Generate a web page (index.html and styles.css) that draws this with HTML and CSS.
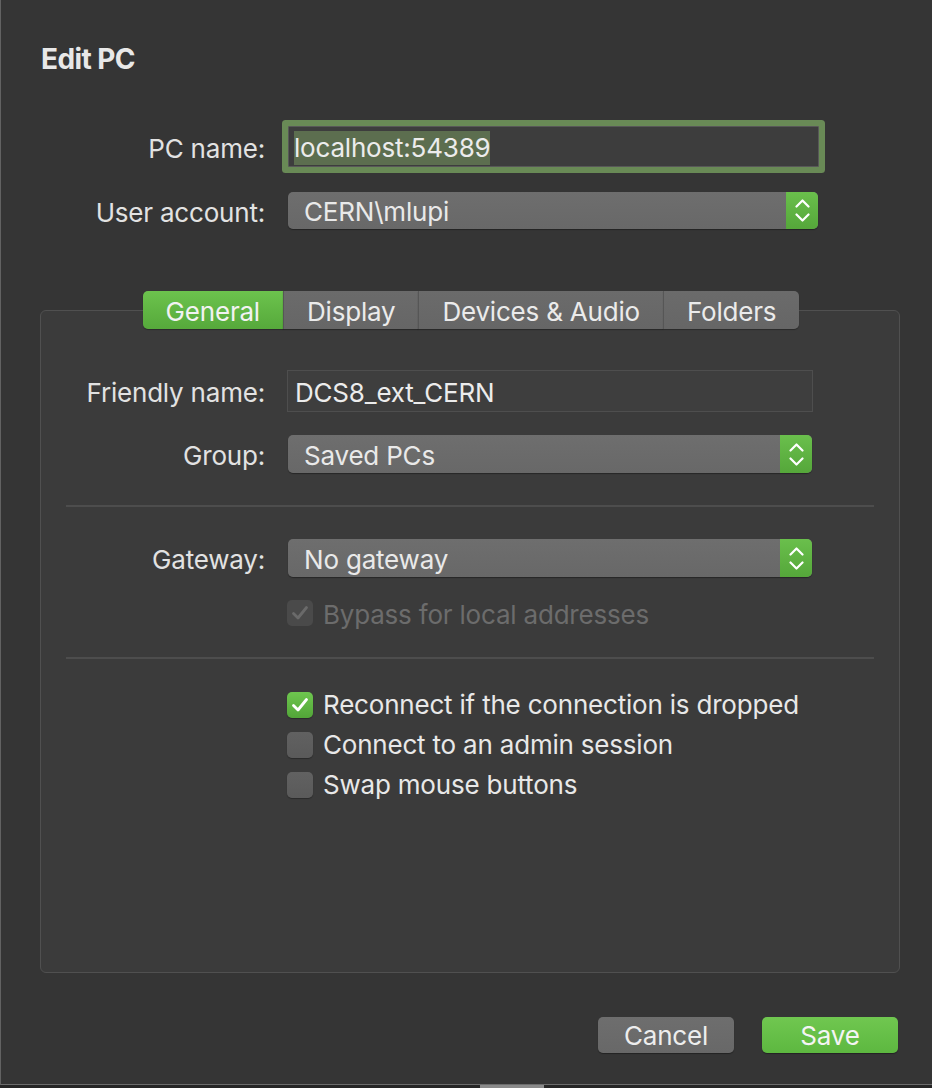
FILE: index.html
```html
<!DOCTYPE html>
<html>
<head>
<meta charset="utf-8">
<title>Edit PC</title>
<link rel="stylesheet" href="styles.css">
</head>
<body>
<div class="window">
  <h1 class="title">Edit PC</h1>

  <div class="top-form">
    <div class="row">
      <span class="label">PC name:</span>
      <div class="field field-focused"><span class="selection">localhost:54389</span></div>
    </div>
    <div class="row row-user">
      <span class="label">User account:</span>
      <div class="popup popup-top">
        <span class="popup-text">CERN\mlupi</span>
        <span class="stepper"><svg class="chev" viewBox="-1.5 -1.5 15 23" width="15" height="23"><path d="M0 6 L6 0 L12 6 M0 14 L6 20 L12 14"/></svg></span>
      </div>
    </div>
  </div>

  <div class="tabview">
    <div class="tabs">
      <div class="tab tab-active">General</div>
      <div class="tab">Display</div>
      <div class="tab">Devices &amp; Audio</div>
      <div class="tab">Folders</div>
    </div>
    <div class="panel">
      <div class="prow prow-friendly">
        <span class="plabel">Friendly name:</span>
        <div class="field field-plain"><span class="field-text">DCS8_ext_CERN</span></div>
      </div>
      <div class="prow prow-group">
        <span class="plabel">Group:</span>
        <div class="popup popup-panel">
          <span class="popup-text">Saved PCs</span>
          <span class="stepper"><svg class="chev" viewBox="-1.5 -1.5 15 23" width="15" height="23"><path d="M0 6 L6 0 L12 6 M0 14 L6 20 L12 14"/></svg></span>
        </div>
      </div>
      <div class="separator sep-1"></div>
      <div class="prow prow-gateway">
        <span class="plabel">Gateway:</span>
        <div class="popup popup-panel">
          <span class="popup-text">No gateway</span>
          <span class="stepper"><svg class="chev" viewBox="-1.5 -1.5 15 23" width="15" height="23"><path d="M0 6 L6 0 L12 6 M0 14 L6 20 L12 14"/></svg></span>
        </div>
      </div>
      <div class="check-row check-bypass disabled">
        <span class="box box-disabled"><svg class="tick" viewBox="0 0 26 26" width="26" height="26"><path d="M6.5 13.5 L11 18 L19.5 7.5"/></svg></span>
        <span class="check-label">Bypass for local addresses</span>
      </div>
      <div class="separator sep-2"></div>
      <div class="check-list">
        <div class="check-row">
          <span class="box box-on"><svg class="tick" viewBox="0 0 26 26" width="26" height="26"><path d="M6.5 13.5 L11 18 L19.5 7.5"/></svg></span>
          <span class="check-label">Reconnect if the connection is dropped</span>
        </div>
        <div class="check-row">
          <span class="box box-off"></span>
          <span class="check-label">Connect to an admin session</span>
        </div>
        <div class="check-row">
          <span class="box box-off"></span>
          <span class="check-label">Swap mouse buttons</span>
        </div>
      </div>
    </div>
  </div>

  <div class="buttons">
    <button class="btn btn-cancel">Cancel</button>
    <button class="btn btn-save">Save</button>
  </div>
</div>
<div class="desk"><span class="desk-item"></span></div>
</body>
</html>
```

FILE: styles.css
```css
html, body {
  margin: 0;
  padding: 0;
}
body {
  width: 932px;
  height: 1088px;
  overflow: hidden;
  background: #1f1f1f;
  font-family: "Inter", "Liberation Sans", sans-serif;
  font-size: 26px;
  letter-spacing: -0.2px;
  color: #e6e6e6;
}
.window {
  box-sizing: border-box;
  width: 932px;
  height: 1085px;
  background: #353535;
  border-left: 1px solid #626262;
  border-bottom: 1px solid #6c6c6c;
  display: flex;
  flex-direction: column;
}
.desk {
  height: 3px;
  background: #262626;
  display: flex;
  padding-left: 480px;
}
.desk-item {
  width: 64px;
  height: 3px;
  background: #8a8a8a;
}
.title {
  margin: 43px 0 0 40px;
  font-size: 28px;
  line-height: 32px;
  font-weight: 700;
  letter-spacing: -0.6px;
  color: #e8e8e8;
}
.top-form {
  display: flex;
  flex-direction: column;
  gap: 25px;
  margin-top: 51px;
}
.row {
  display: flex;
  align-items: center;
  gap: 23px;
}
.label {
  width: 264px;
  text-align: right;
  line-height: 32px;
  margin-top: 4px;
  color: #e2e2e2;
}
.field {
  box-sizing: border-box;
  display: flex;
  align-items: center;
  line-height: 32px;
  color: #ececec;
}
.field-focused {
  width: 531px;
  height: 41px;
  padding-left: 5px;
  padding-top: 2px;
  background: #3d3d3d;
  border: 1px solid #585858;
  border-radius: 1px;
  box-shadow: 0 0 0 6px #698a56;
}
.selection {
  background: #5c6e4f;
  padding: 1px 0;
}
.row-user .popup {
  height: 37px;
}
.popup {
  box-sizing: border-box;
  width: 530px;
  display: flex;
  align-items: stretch;
  background: linear-gradient(#6e6e6e, #686868);
  border-radius: 5px;
  box-shadow: 0 1px 1px rgba(0, 0, 0, 0.35);
  overflow: hidden;
}
.popup-panel {
  width: 524px;
  height: 38px;
}
.popup-text {
  flex: 1;
  display: flex;
  align-items: center;
  padding-left: 16px;
  padding-top: 3px;
  line-height: 32px;
  color: #e9e9e9;
}
.stepper {
  width: 32px;
  display: flex;
  align-items: center;
  justify-content: center;
  background: linear-gradient(#6abf4c, #55a73a);
}
.chev path {
  fill: none;
  stroke: #ffffff;
  stroke-width: 2.2;
  stroke-linecap: round;
  stroke-linejoin: round;
}
.tabview {
  margin: 62px 32px 0 39px;
  display: flex;
  flex-direction: column;
}
.tabs {
  display: flex;
  justify-content: center;
  height: 38px;
  position: relative;
  z-index: 1;
  padding-left: 2px;
}
.tab {
  padding: 2px 23px 0;
  display: flex;
  align-items: center;
  background: linear-gradient(#6b6b6b, #666666);
  color: #ebebeb;
  border-left: 1px solid #565656;
  box-shadow: 0 1px 1px rgba(0, 0, 0, 0.3);
}
.tab:first-child {
  border-left: none;
  border-radius: 5px 0 0 5px;
}
.tab:last-child {
  border-radius: 0 5px 5px 0;
}
.tab-active {
  background: linear-gradient(#6cc34d, #56a93b);
  color: #f2f2f2;
}
.panel {
  box-sizing: border-box;
  margin-top: -19px;
  height: 663px;
  background: #3b3b3b;
  border: 1px solid #505050;
  border-radius: 6px;
  display: flex;
  flex-direction: column;
}
.prow {
  display: flex;
  align-items: center;
  gap: 23px;
}
.plabel {
  width: 224px;
  text-align: right;
  line-height: 32px;
  margin-top: 4px;
  color: #e2e2e2;
}
.prow-friendly {
  margin-top: 59px;
}
.field-plain {
  width: 526px;
  height: 42px;
  padding-left: 7px;
  padding-top: 3px;
  background: #3e3e3e;
  border: 1px solid #4e4e4e;
  margin-left: -1px;
}
.prow-group {
  margin-top: 23px;
}
.separator {
  height: 2px;
  background: #4d4d4d;
  margin-left: 25px;
  margin-right: 25px;
}
.sep-1 {
  margin-top: 32px;
}
.prow-gateway {
  margin-top: 32px;
}
.check-row {
  display: flex;
  align-items: center;
  gap: 10px;
  height: 32px;
  padding-left: 246px;
}
.check-bypass {
  margin-top: 20px;
}
.check-bypass .check-label {
  padding-top: 3px;
}
.sep-2 {
  margin-top: 28px;
}
.check-list {
  margin-top: 30px;
  display: flex;
  flex-direction: column;
  gap: 8px;
}
.box {
  box-sizing: border-box;
  width: 26px;
  height: 26px;
  border-radius: 5px;
  display: flex;
}
.box-on {
  background: linear-gradient(#6ec64f, #52a638);
  box-shadow: 0 1px 1px rgba(0, 0, 0, 0.3);
}
.box-on .tick path {
  fill: none;
  stroke: #ffffff;
  stroke-width: 2.8;
  stroke-linecap: round;
  stroke-linejoin: round;
}
.box-off {
  background: linear-gradient(#616161, #5a5a5a);
  box-shadow: 0 1px 1px rgba(0, 0, 0, 0.3);
}
.box-disabled {
  background: #4a4a4a;
}
.box-disabled .tick path {
  fill: none;
  stroke: #6a6a6a;
  stroke-width: 2.8;
  stroke-linecap: round;
  stroke-linejoin: round;
}
.check-label {
  line-height: 32px;
  color: #e8e8e8;
}
.disabled .check-label {
  color: #6c6c6c;
}
.buttons {
  margin-top: 44px;
  display: flex;
  justify-content: flex-end;
  gap: 28px;
  padding-right: 34px;
}
.btn {
  box-sizing: border-box;
  width: 136px;
  height: 36px;
  border: none;
  border-radius: 5px;
  font-family: "Inter", "Liberation Sans", sans-serif;
  font-size: 26px;
  letter-spacing: -0.2px;
  line-height: 32px;
  padding: 2px 0 0;
  color: #ededed;
  box-shadow: 0 1px 1px rgba(0, 0, 0, 0.35);
}
.btn-cancel {
  background: linear-gradient(#6e6e6e, #686868);
}
.btn-save {
  background: linear-gradient(#70c750, #5db840);
  color: #f4f4f4;
}
```
